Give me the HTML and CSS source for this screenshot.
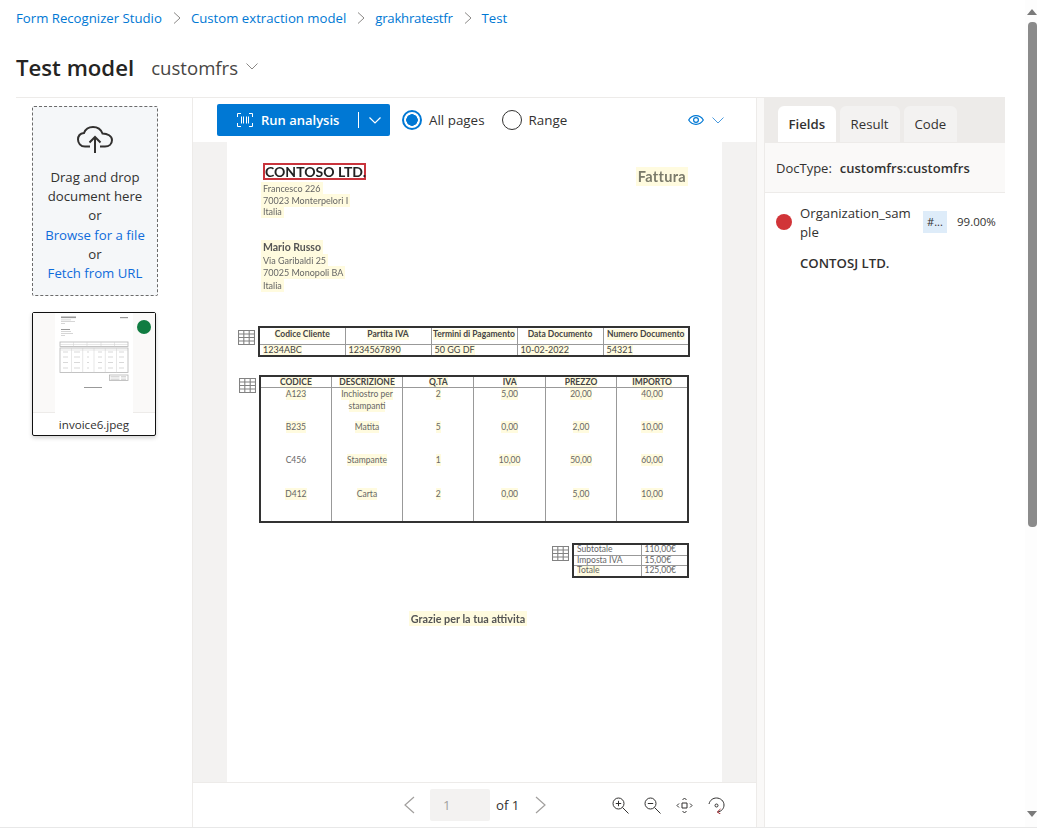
FILE: index.html
```html
<!DOCTYPE html>
<html lang="en">
  <head>
    <meta charset="UTF-8">
    <title>Form Recognizer Studio - Test model</title>
    <link rel="stylesheet" href="styles.css">
  </head>
  <body>
    <div class="app">
      <div class="main">
        <nav class="crumbs">
          <a>Form Recognizer Studio</a>
          <svg class="crumb-sep" viewBox="0 0 8 12"><path d="M1 .5 7 6 1 11.500"/></svg>
          <a>Custom extraction model</a>
          <svg class="crumb-sep" viewBox="0 0 8 12"><path d="M1 .5 7 6 1 11.500"/></svg>
          <a class="crumb-tight">grakhratestfr</a>
          <svg class="crumb-sep" viewBox="0 0 8 12"><path d="M1 .5 7 6 1 11.500"/></svg>
          <a>Test</a>
        </nav>
        <header class="title-row">
          <h1>Test model</h1>
          <span class="model-name">customfrs</span>
          <svg class="model-caret" viewBox="0 0 12 7"><path d="M.5 .5 6 6l5.500-5.500"/></svg>
        </header>

        <div class="workspace">
          <aside class="files">
            <div class="dropzone">
              <svg class="upload-icon" viewBox="0 0 36 27"><path d="M13 20.500H8C3.500 20.500 1 17 1 13.500 1 10 3.500 7.500 7 7 8.500 3 12 1 16 1c4.500 0 8 2.500 9.500 6.500 5 0 9.500 2.500 9.500 6.500s-3 6.500-7 6.500h-5M18 27V11M12.500 16.500 18 11l5.500 5.500"/></svg>
              <p>Drag and drop<br>document here<br>or<br><a>Browse for a file</a><br>or<br><a>Fetch from URL</a></p>
            </div>
            <div class="thumb">
              <div class="thumb-image">
                <svg class="mini-doc" viewBox="0 0 78 100">
                  <rect class="mini-bg" width="78" height="100"/>
                  <rect class="mini-strong" x="6" y="3.500" width="15" height="1.600"/>
                  <rect class="mini-text" x="6" y="6.500" width="10" height=".8"/>
                  <rect class="mini-text" x="6" y="8.200" width="14" height=".8"/>
                  <rect class="mini-text" x="6" y="10" width="4" height=".8"/>
                  <rect class="mini-strong" x="65" y="4" width="8" height="1.200"/>
                  <rect class="mini-strong" x="6" y="16" width="9" height="1"/>
                  <rect class="mini-text" x="6" y="18" width="10" height=".8"/>
                  <rect class="mini-text" x="6" y="20" width="12" height=".8"/>
                  <rect class="mini-text" x="6" y="22" width="4" height=".8"/>
                  <rect class="mini-line" x="5" y="29" width="68" height="4.500"/>
                  <path class="mini-rule" d="M18.500 29v4.500M32 29v4.500M46 29v4.500M59.500 29v4.500M5 31.500h68"/>
                  <rect class="mini-line" x="5" y="35" width="68" height="24.500"/>
                  <path class="mini-rule" d="M16.500 35v24.500M27.700 35v24.500M39 35v24.500M50.300 35v24.500M61.500 35v24.500M5 37h68"/>
                  <path class="mini-dots" d="M8 39h5M19 39h6M32 39h2M43 39h4M53 39h5M64 39h5M8 44h5M19 44h6M32 44h2M43 44h4M53 44h5M64 44h5M8 49.500h5M19 49.500h6M32 49.500h2M43 49.500h4M53 49.500h5M64 49.500h5M8 55h5M19 55h6M32 55h2M43 55h4M53 55h5M64 55h5"/>
                  <rect class="mini-line" x="54.500" y="62" width="18.500" height="5.500"/>
                  <path class="mini-dots" d="M55.500 63.500h9M55.500 65h9M55.500 66.500h9M66 63.500h5M66 65h5M66 66.500h5"/>
                  <rect class="mini-strong" x="29" y="74" width="18" height="1"/>
                </svg>
                <span class="thumb-dot"></span>
              </div>
              <div class="thumb-name">invoice6.jpeg</div>
            </div>
          </aside>

          <section class="viewer">
            <div class="toolbar">
              <div class="run-btn">
                <span class="run-main">
                  <svg class="run-icon" viewBox="0 0 16 14"><path d="M4 .5H.5V4M12 .5h3.500V4M4 13.500H.5V10M12 13.500h3.500V10M4.500 3.500v7M6.500 3.500v7M9.500 3.500v7M11.500 3.500v7"/></svg>
                  Run analysis
                </span>
                <span class="run-caret">
                  <svg viewBox="0 0 12 7"><path d="M.5 .5 6 6l5.500-5.500"/></svg>
                </span>
              </div>
              <label class="radio radio-on"><span class="radio-mark"></span>All pages</label>
              <label class="radio"><span class="radio-mark"></span>Range</label>
              <span class="view-opts">
                <svg class="eye-icon" viewBox="0 0 16 10"><path d="M.7 5C2.500 2 5 .7 8 .7s5.500 1.300 7.300 4.300C13.500 8 11 9.300 8 9.300S2.500 8 .7 5Z"/><circle cx="8" cy="5" r="2.400"/></svg>
                <svg class="view-caret" viewBox="0 0 12 7"><path d="M.5 .5 6 6l5.500-5.500"/></svg>
              </span>
            </div>

            <div class="canvas">
              <div class="doc-page">
                <div class="doc-head">
                  <div>
                    <div class="doc-org"><span class="doc-org-text">CONTOSO LTD.</span></div>
                    <div class="doc-lines">
                      <span class="hl">Francesco 226</span><br>
                      <span class="hl">70023 Monterpelori I</span><br>
                      <span class="hl">Italia</span>
                    </div>
                    <div class="doc-name"><span class="hl">Mario Russo</span></div>
                    <div class="doc-lines doc-lines-open">
                      <span class="hl">Via Garibaldi 25</span><br>
                      <span class="hl">70025 Monopoli BA</span><br>
                      <span class="hl">Italia</span>
                    </div>
                  </div>
                  <div class="doc-kind"><span class="hl">Fattura</span></div>
                </div>

                <div class="doc-row doc-row-first">
                  <svg class="table-icon" viewBox="0 0 17 15"><path d="M.5 .5h16v14H.5zM.5 4h16M.5 7.500h16M.5 11h16M5.800 .5v14M11.200 .5v14"/></svg>
                  <table class="doc-table table-info">
                    <tr><th><span class="hl">Codice Cliente</span></th><th><span class="hl">Partita IVA</span></th><th><span class="hl">Termini di Pagamento</span></th><th><span class="hl">Data Documento</span></th><th><span class="hl">Numero Documento</span></th></tr>
                    <tr><td><span class="hl">1234ABC</span></td><td><span class="hl">1234567890</span></td><td><span class="hl">50 GG DF</span></td><td><span class="hl">10-02-2022</span></td><td><span class="hl">54321</span></td></tr>
                  </table>
                </div>

                <div class="doc-row doc-row-items">
                  <svg class="table-icon" viewBox="0 0 17 15"><path d="M.5 .5h16v14H.5zM.5 4h16M.5 7.500h16M.5 11h16M5.800 .5v14M11.200 .5v14"/></svg>
                  <table class="doc-table table-items">
                    <tr><th><span class="hl">CODICE</span></th><th><span class="hl">DESCRIZIONE</span></th><th><span class="hl">Q.TA</span></th><th><span class="hl">IVA</span></th><th><span class="hl">PREZZO</span></th><th><span class="hl">IMPORTO</span></th></tr>
                    <tr class="item-1"><td><span class="hl">A123</span></td><td><span class="hl">Inchiostro per</span><br><span class="hl">stampanti</span></td><td><span class="hl">2</span></td><td><span class="hl">5,00</span></td><td><span class="hl">20,00</span></td><td><span class="hl">40,00</span></td></tr>
                    <tr class="item-2"><td><span class="hl">B235</span></td><td><span class="hl">Matita</span></td><td><span class="hl">5</span></td><td><span class="hl">0,00</span></td><td><span class="hl">2,00</span></td><td><span class="hl">10,00</span></td></tr>
                    <tr class="item-3"><td>C456</td><td><span class="hl">Stampante</span></td><td><span class="hl">1</span></td><td><span class="hl">10,00</span></td><td><span class="hl">50,00</span></td><td><span class="hl">60,00</span></td></tr>
                    <tr class="item-4"><td><span class="hl">D412</span></td><td><span class="hl">Carta</span></td><td><span class="hl">2</span></td><td><span class="hl">0,00</span></td><td><span class="hl">5,00</span></td><td><span class="hl">10,00</span></td></tr>
                  </table>
                </div>

                <div class="doc-row doc-row-totals">
                  <svg class="table-icon" viewBox="0 0 17 15"><path d="M.5 .5h16v14H.5zM.5 4h16M.5 7.500h16M.5 11h16M5.800 .5v14M11.200 .5v14"/></svg>
                  <table class="doc-table table-totals">
                    <tr><td>Subtotale</td><td>110,00€</td></tr>
                    <tr><td>Imposta IVA</td><td>15,00€</td></tr>
                    <tr><td><span class="hl">Totale</span></td><td>125,00€</td></tr>
                  </table>
                </div>

                <div class="doc-thanks"><span class="hl">Grazie per la tua attivita</span></div>
              </div>
            </div>

            <div class="pager">
              <svg class="pager-arrow" viewBox="0 0 12 18"><path d="M11 1 2 9l9 8"/></svg>
              <span class="pager-input">1</span>
              <span class="pager-of">of 1</span>
              <svg class="pager-arrow pager-next" viewBox="0 0 12 18"><path d="M1 1l9 8-9 8"/></svg>
              <svg class="tool tool-first" viewBox="0 0 17 17"><circle cx="6.500" cy="6.500" r="5.500"/><path d="M10.500 10.500l6 6M3.800 6.500h5.400M6.500 3.800v5.400"/></svg>
              <svg class="tool" viewBox="0 0 17 17"><circle cx="6.500" cy="6.500" r="5.500"/><path d="M10.500 10.500l6 6M3.800 6.500h5.400"/></svg>
              <svg class="tool" viewBox="0 0 17 17"><path d="M6 6h5v5H6zM6.500 3 8.500 1l2 2M6.500 14l2 2 2-2M3 6.500l-2 2 2 2M14 6.500l2 2-2 2"/></svg>
              <svg class="tool" viewBox="0 0 17 17"><path d="M1 7C2 3 5 1 8.500 1c4 0 7.500 3 7.500 7 0 3.500-2.500 6.500-6.500 7"/><path class="tool-accent" d="M12.500 12 9.300 15l3.200 2"/><circle cx="8.500" cy="8.500" r="1.500"/></svg>
            </div>
          </section>

          <div class="gutter"></div>

          <section class="results">
            <div class="tabs">
              <span class="tab tab-active">Fields</span>
              <span class="tab">Result</span>
              <span class="tab">Code</span>
            </div>
            <div class="doctype">DocType:<b>customfrs:customfrs</b></div>
            <div class="field">
              <span class="field-dot"></span>
              <span class="field-name">Organization_sam<br>ple</span>
              <span class="field-type">#...</span>
              <span class="field-conf">99.00%</span>
            </div>
            <div class="field-value">CONTOSJ LTD.</div>
          </section>
        </div>
      </div>

      <div class="scrollbar">
        <span class="scroll-up"></span>
        <span class="scroll-thumb"></span>
        <span class="scroll-down"></span>
      </div>
    </div>
  </body>
</html>
```

FILE: styles.css
```css
* { box-sizing: border-box; }
html, body { margin: 0; height: 100%; }
body {
  font-family: "Open Sans", "Noto Sans", sans-serif;
  font-size: 13.200px;
  color: #323130;
  background-color: #ffffff;
  overflow: hidden;
}
p { margin: 0; }

.app { display: flex; height: 828px; border-bottom: 1px solid #e8e8e8; }
.main { flex: 0 0 1005px; display: flex; flex-direction: column; }

/* breadcrumb + title */
.crumbs { display: flex; align-items: center; height: 36px; padding-left: 16px; }
.crumbs a { color: #0078d4; }
.crumbs .crumb-tight { letter-spacing: -0.25px; }
.crumb-sep { width: 8px; height: 12px; margin: 0 10px 0 11px; }
.crumb-sep path { fill: none; stroke: #8a8886; stroke-width: 1; }
.title-row { display: flex; align-items: center; height: 61px; padding: 2px 0 0 16px; }
.title-row h1 { margin: 0; font-size: 22.200px; font-weight: 600; color: #252423; }
.model-name { margin-left: 17px; font-size: 18.600px; color: #484644; }
.model-caret { width: 12px; height: 7px; margin-left: 8px; margin-bottom: 2px; }
.model-caret path { fill: none; stroke: #8a8886; }

.workspace { flex: 1; display: flex; margin-left: 16px; border-top: 1px solid #edebe9; min-height: 0; }

/* left column */
.files { flex: 0 0 177px; padding: 8px 0 0 16px; border-right: 1px solid #edebe9; }
.dropzone {
  width: 126px;
  height: 190px;
  padding-top: 19px;
  border: 1px dashed #6b6b6b;
  border-radius: 2px;
  background-color: #f5f7f9;
  text-align: center;
  line-height: 19.200px;
}
.upload-icon { display: block; width: 36px; height: 27px; margin: 0 auto 15px; }
.upload-icon path { fill: none; stroke: #323130; stroke-width: 2; }
.dropzone a { color: #0f6cdb; }
.thumb {
  width: 124px;
  height: 124px;
  margin-top: 16px;
  border: 1px solid #111111;
  border-radius: 2px;
  background-color: #ffffff;
  box-shadow: 0 2px 4px rgba(0, 0, 0, 0.18);
}
.thumb-image { position: relative; height: 100px; padding-left: 22px; background-color: #faf9f8; border-bottom: 1px solid #edebe9; }
.mini-doc { display: block; width: 78px; height: 100px; }
.mini-bg { fill: #ffffff; }
.mini-strong { fill: #999999; }
.mini-text { fill: #cccccc; }
.mini-line { fill: none; stroke: #b5b5b5; stroke-width: 0.8; }
.mini-rule { fill: none; stroke: #cfcfcf; stroke-width: 0.5; }
.mini-dots { fill: none; stroke: #cfcfcf; stroke-width: 0.8; }
.thumb-dot { position: absolute; top: 7px; right: 4px; width: 14px; height: 14px; border-radius: 50%; background-color: #107c41; }
.thumb-name { text-align: center; line-height: 23px; font-size: 11.600px; }

/* center column */
.viewer { flex: 0 0 563px; display: flex; flex-direction: column; }
.toolbar { display: flex; align-items: center; flex: 0 0 44px; padding-left: 24px; }
.run-btn { display: flex; align-items: center; width: 173px; height: 32px; border-radius: 2px; background-color: #0078d4; color: #ffffff; font-weight: 600; font-size: 13px; }
.run-main { display: flex; align-items: center; width: 142px; height: 16px; padding-left: 20px; border-right: 1px solid #ffffff; }
.run-icon { width: 16px; height: 14px; margin-right: 8px; }
.run-icon path { fill: none; stroke: #ffffff; stroke-width: 1; }
.run-caret { flex: 1; display: flex; justify-content: center; }
.run-caret svg { width: 12px; height: 7px; }
.run-caret path { fill: none; stroke: #ffffff; stroke-width: 1.200; }
.radio { display: flex; align-items: center; margin-left: 12px; font-size: 13.400px; }
.radio + .radio { margin-left: 17px; }
.radio-mark { width: 20px; height: 20px; margin-right: 7px; border: 1px solid #323130; border-radius: 50%; }
.radio-on .radio-mark { border: 2px solid #0078d4; background: radial-gradient(circle, #0078d4 5.500px, #ffffff 6px); }
.view-opts { display: flex; align-items: center; margin-left: auto; margin-right: 32px; }
.eye-icon { width: 16px; height: 10px; }
.eye-icon path, .eye-icon circle { fill: none; stroke: #0078d4; stroke-width: 1.200; }
.view-caret { width: 12px; height: 7px; margin-left: 8px; }
.view-caret path { fill: none; stroke: #4a9ade; }

.canvas { flex: 1; min-height: 0; padding-left: 34px; background-color: #f3f2f1; border-bottom: 1px solid #edebe9; }
.doc-page {
  width: 495px;
  height: 640px;
  padding-top: 21px;
  background-color: #ffffff;
  font-family: Lato, "Liberation Sans", sans-serif;
  color: #666666;
}
.hl { padding: 1px 2px; margin-left: -2px; background-color: #fffbdf; }
.doc-head { display: flex; justify-content: space-between; height: 143px; padding: 0 36px; }
.doc-org {
  width: 103px;
  height: 17px;
  margin-bottom: 2px;
  border: 2px solid #c8343c;
  font-size: 14px;
  font-weight: 700;
  line-height: 13px;
  color: #222222;
  white-space: nowrap;
}
.doc-org-text { filter: blur(0.3px); display: inline-block; }
.doc-lines { font-size: 9px; line-height: 11.500px; padding-top: 1px; filter: blur(0.25px); }
.doc-name { margin-top: 22px; font-size: 10.500px; font-weight: 700; line-height: 14px; color: #555555; filter: blur(0.25px); }
.doc-lines-open { line-height: 12.500px; }
.doc-kind { padding-top: 4px; font-size: 14.500px; font-weight: 700; letter-spacing: 0.3px; line-height: 19px; color: #7a7a6a; filter: blur(0.3px); }
.doc-kind .hl { margin-left: 0; margin-right: -2px; }

.doc-row { display: flex; padding-left: 11px; }
.table-icon { flex: 0 0 17px; height: 15px; margin-top: 4px; margin-right: 3px; }
.table-icon path { fill: none; stroke: #828282; stroke-width: 1.100; }
.doc-table { table-layout: fixed; border-collapse: collapse; border: 2px solid #333333; font-size: 8.500px; line-height: 11px; }
.doc-table th, .doc-table td { padding: 0; text-align: center; vertical-align: top; white-space: nowrap; border-left: 1px solid #999999; }
.doc-table th { font-weight: 700; color: #444444; }
.doc-table .hl { display: inline-block; padding: 0; margin-left: 0; }

.doc-row-first { margin-top: 20px; }
.table-info { width: 432px; height: 30px; }
.table-info th { height: 17px; padding-top: 1px; border-bottom: 1px solid #999999; }
.table-info td { height: 11px; padding-left: 3px; text-align: left; font-size: 9px; line-height: 10px; color: #444444; }

.doc-row-items { margin-top: 18px; padding-left: 12px; }
.doc-row-items .table-icon { margin-top: 3px; }
.table-items { width: 430px; height: 147px; }
.table-items th { height: 10px; line-height: 10px; border-bottom: 1px solid #999999; }
.table-items td { line-height: 12px; }
.item-1 td { height: 34px; }
.item-2 td { height: 33px; }
.item-3 td { height: 34px; }
.item-4 td { height: 34px; }

.doc-row-totals { justify-content: flex-end; margin-top: 20px; padding-right: 33px; }
.doc-row-totals .table-icon { margin-top: 3px; }
.table-totals { width: 117px; height: 34px; line-height: 9.500px; }
.table-totals td { padding-left: 3px; text-align: left; border-bottom: 1px solid #999999; }
.table-totals td:first-child { width: 68px; }

.doc-thanks { margin-top: 33px; padding-right: 11px; text-align: center; font-size: 10.800px; font-weight: 700; line-height: 15px; color: #555555; filter: blur(0.25px); }

.pager { flex: 0 0 44px; display: flex; align-items: center; padding-left: 210px; }
.pager-arrow { width: 12px; height: 18px; }
.pager-arrow path { fill: none; stroke: #a19f9d; stroke-width: 1.200; }
.pager-input { width: 60px; height: 32px; margin-left: 15px; padding-left: 13px; line-height: 32px; border-radius: 2px; background-color: #f3f2f1; color: #a19f9d; }
.pager-of { margin-left: 6px; }
.pager-next { margin-left: 16px; }
.tool { width: 17px; height: 17px; margin-left: 15px; }
.tool-first { margin-left: 65px; }
.tool path, .tool circle { fill: none; stroke: #323130; stroke-width: 1; }
.tool .tool-accent { stroke: #a4262c; }

.gutter { flex: 0 0 9px; background-color: #faf9f8; border-left: 1px solid #edebe9; border-right: 1px solid #edebe9; }

/* right column */
.results { flex: 0 0 240px; }
.tabs { display: flex; gap: 4px; height: 45px; padding: 8px 0 0 13px; background-color: #edebe9; border-bottom: 1px solid #edebe9; }
.tab { padding: 0 11px; height: 36px; line-height: 36px; border-radius: 6px 6px 0 0; background-color: #f3f2f1; }
.tabs .tab-active { padding: 0 10.500px; background-color: #ffffff; font-weight: 600; }
.doctype { height: 50px; padding-left: 11px; font-size: 13px; line-height: 50px; background-color: #faf9f8; border-bottom: 1px solid #edebe9; }
.doctype b { margin-left: 8px; font-weight: 600; }
.field { display: flex; align-items: flex-start; padding: 11px 0 0 11px; }
.field-dot { flex: 0 0 16px; height: 16px; margin-top: 10px; border-radius: 50%; background-color: #d13438; }
.field-name { width: 123px; margin-left: 8px; line-height: 19px; }
.field-type { width: 24px; height: 22px; line-height: 22px; margin-top: 7px; text-align: center; background-color: #deecf9; font-size: 11px; }
.field-conf { margin-left: 10px; margin-top: 7px; line-height: 22px; font-size: 11.500px; }
.field-value { margin: 12px 0 0 35px; font-size: 13.200px; font-weight: 600; }

/* page scrollbar */
.scrollbar { position: relative; flex: 0 0 12px; margin-left: auto; background-color: #fdfdfd; }
.scroll-up, .scroll-down { position: absolute; right: 0; width: 0; height: 0; border-left: 5px solid transparent; border-right: 5px solid transparent; }
.scroll-up { top: 9px; border-bottom: 6px solid #7a7a7a; }
.scroll-down { top: 811px; border-top: 6px solid #7a7a7a; }
.scroll-thumb { position: absolute; top: 22px; right: 0; width: 9px; height: 505px; border-radius: 4px; background-color: #8b8b8b; }
```
